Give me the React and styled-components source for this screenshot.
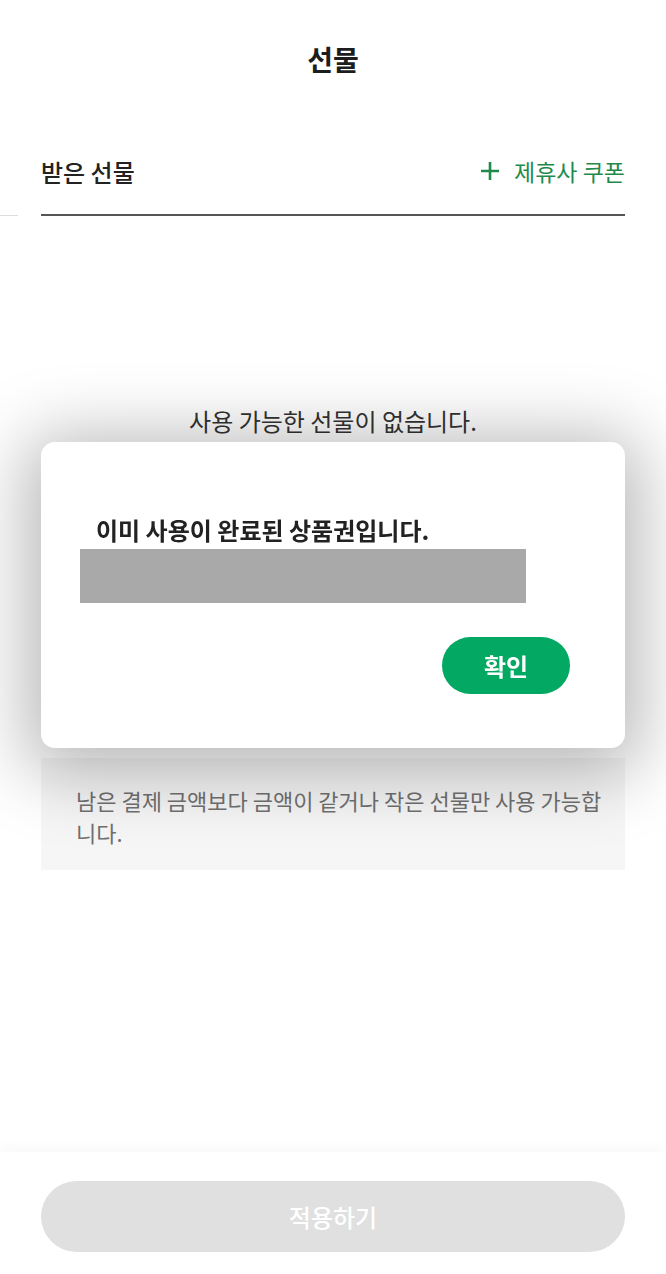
import React from 'react';
import styled, { createGlobalStyle } from 'styled-components';

const GlobalStyle = createGlobalStyle`
  html, body {
    margin: 0;
    padding: 0;
    background: #fff;
  }
  body {
    font-family: "Noto Sans CJK KR", "Noto Sans", sans-serif;
    color: #222;
  }
`;

const Page = styled.div`
  width: 100%;
  min-height: 1274px;
  display: flex;
  flex-direction: column;
  background: #fff;
`;

const Header = styled.header`
  height: 120px;
  display: flex;
  align-items: center;
  justify-content: center;
  padding-bottom: 2px;
  box-sizing: border-box;
  h1 {
    margin: 0;
    font-size: 28px;
    font-weight: 700;
    color: #1d1d1d;
  }
`;

/* tab row with the green add-coupon link on the right */
const TabRow = styled.div`
  position: relative;
  margin: 0 41px;
  height: 96px;
  padding-top: 8px;
  box-sizing: border-box;
  display: flex;
  align-items: center;
  justify-content: space-between;
  border-bottom: 2px solid #555;
  &::after {
    content: '';
    position: absolute;
    left: -41px;
    bottom: -2px;
    width: 18px;
    height: 1px;
    background: #ddd;
  }
`;

const TabTitle = styled.span`
  font-size: 24px;
  font-weight: 500;
  color: #222;
`;

const AddCoupon = styled.button`
  border: 0;
  background: none;
  padding: 0;
  display: flex;
  align-items: center;
  gap: 14px;
  font-family: inherit;
  font-size: 23px;
  color: #1f8a4c;
  svg {
    display: block;
  }
`;

const Content = styled.main`
  flex: 1;
  display: flex;
  flex-direction: column;
  align-items: center;
  padding: 0 41px;
`;

const EmptyText = styled.p`
  margin: 189px 0 0;
  font-size: 24px;
  line-height: 32px;
  color: #333;
`;

const Notice = styled.div`
  align-self: stretch;
  margin-top: 321px;
  padding: 26px 20px 22px 35px;
  background: #f6f6f6;
  font-size: 22px;
  line-height: 32px;
  color: #707070;
`;

const BottomBar = styled.footer`
  position: fixed;
  left: 0;
  right: 0;
  bottom: 0;
  height: 122px;
  padding: 29px 41px 0;
  box-sizing: border-box;
  background: #fff;
  box-shadow: 0 -6px 10px rgba(0, 0, 0, 0.025);
`;

const ApplyButton = styled.button`
  width: 100%;
  height: 71px;
  border: 0;
  border-radius: 36px;
  background: #e0e0e0;
  color: #fff;
  font-family: inherit;
  font-size: 24px;
  font-weight: 500;
`;

/* alert dialog laid over the page */
const Dialog = styled.div`
  position: fixed;
  top: 442px;
  left: 41px;
  width: 584px;
  box-sizing: border-box;
  padding: 71px 55px 54px 39px;
  border-radius: 14px;
  background: #fff;
  box-shadow: 0 10px 70px 16px rgba(0, 0, 0, 0.28);
  display: flex;
  flex-direction: column;
`;

const DialogMessage = styled.p`
  margin: 0 0 0 16px;
  font-size: 24px;
  line-height: 34px;
  font-weight: 700;
  color: #222;
`;

const Masked = styled.div`
  margin-top: 2px;
  width: 446px;
  height: 54px;
  background: #a9a9a9;
`;

const DialogActions = styled.div`
  display: flex;
  justify-content: flex-end;
  margin-top: 34px;
`;

const ConfirmButton = styled.button`
  width: 128px;
  height: 57px;
  border: 0;
  border-radius: 29px;
  background: #03a862;
  color: #fff;
  font-family: inherit;
  font-size: 24px;
  font-weight: 700;
`;

const PlusIcon = () => (
  <svg width="20" height="20" viewBox="0 0 20 20">
    <path d="M10 1v18M1 10h18" stroke="#1f8a4c" strokeWidth="2.6" fill="none" />
  </svg>
);

export default function App() {
  return (
    <Page>
      <GlobalStyle />
      <Header>
        <h1>선물</h1>
      </Header>
      <TabRow>
        <TabTitle>받은 선물</TabTitle>
        <AddCoupon>
          <PlusIcon />
          제휴사 쿠폰
        </AddCoupon>
      </TabRow>
      <Content>
        <EmptyText>사용 가능한 선물이 없습니다.</EmptyText>
        <Notice>남은 결제 금액보다 금액이 같거나 작은 선물만 사용 가능합니다.</Notice>
      </Content>
      <BottomBar>
        <ApplyButton disabled>적용하기</ApplyButton>
      </BottomBar>
      <Dialog role="alertdialog">
        <DialogMessage>이미 사용이 완료된 상품권입니다.</DialogMessage>
        <Masked />
        <DialogActions>
          <ConfirmButton>확인</ConfirmButton>
        </DialogActions>
      </Dialog>
    </Page>
  );
}
